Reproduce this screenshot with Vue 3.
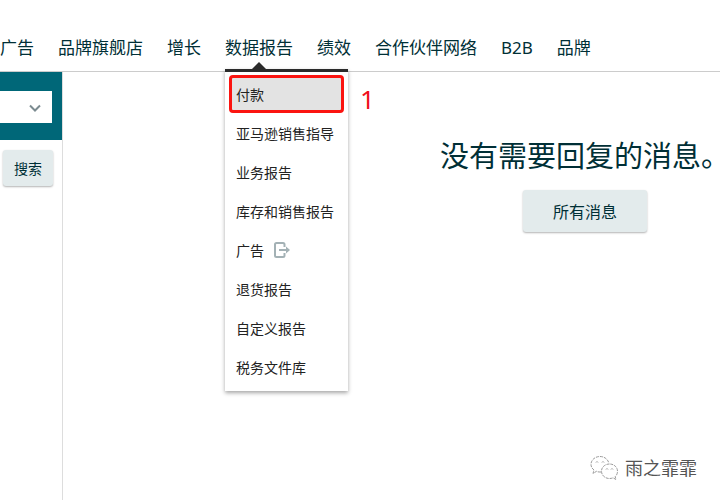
<template>
  <div class="page">
    <header class="topbar">
      <nav aria-label="主导航">
        <ul class="nav-list">
          <li v-for="item in navItems" :key="item.id" class="nav-item">
            <a href="#" class="nav-link" @click.prevent="toggle(item)">{{ item.label }}</a>

            <!-- 下拉菜单 -->
            <div v-if="item.children && openId === item.id" class="dropdown">
              <ul class="dropdown-list">
                <li v-for="child in item.children" :key="child.label" class="dropdown-item">
                  <a href="#" :class="['dropdown-link', { active: child.active }]">
                    {{ child.label }}
                    <svg
                      v-if="child.external"
                      class="external-icon"
                      viewBox="0 0 16 16"
                      fill="none"
                      aria-hidden="true"
                    >
                      <path
                        d="M10.5 5V2.5Q10.5 1 9 1H2.5Q1 1 1 2.5V13.5Q1 15 2.5 15H9Q10.5 15 10.5 13.5V11"
                        stroke="currentColor"
                        stroke-width="2"
                      />
                      <path d="M5 8H13" stroke="currentColor" stroke-width="2" />
                      <path d="M12 4.5L16 8L12 11.5Z" fill="currentColor" />
                    </svg>
                  </a>
                  <span v-if="child.mark" class="mark">{{ child.mark }}</span>
                </li>
              </ul>
            </div>
          </li>
        </ul>
      </nav>
    </header>

    <div class="body">
      <aside class="sidebar">
        <div class="filter">
          <div class="select-box">
            <select v-model="filter" class="select" aria-label="筛选">
              <option value=""></option>
            </select>
            <svg class="chevron" viewBox="0 0 12 8" fill="none" aria-hidden="true">
              <path d="M1 1.5L6 6.5L11 1.5" stroke="currentColor" stroke-width="2" />
            </svg>
          </div>
        </div>
        <button type="button" class="btn btn-search">搜索</button>
      </aside>

      <main class="content">
        <div class="empty">
          <h1 class="empty-title">没有需要回复的消息。</h1>
          <button type="button" class="btn btn-all">所有消息</button>
        </div>
      </main>
    </div>

    <!-- 公众号水印 -->
    <div class="watermark">
      <svg class="wechat-icon" viewBox="0 0 28 26" fill="none" stroke="#999" aria-hidden="true">
        <g stroke-dasharray="3 1">
          <path
            d="M11 17C9 17 7.5 17 6.5 16.3L3 18.5L4 15C2 13.5 1 11.5 1 9.5C1 5 5 1.5 10 1.5C14.5 1.5 18 4.5 18.8 8"
          />
          <path
            d="M19.5 9C15 9 11.5 12.2 11.5 16.2C11.5 20.3 15 23.5 19.5 23.5C20.8 23.5 22 23.3 23 22.8L26 24.5L25.2 21.7C26.7 20.3 27.5 18.4 27.5 16.2C27.5 12.2 24 9 19.5 9Z"
          />
        </g>
        <path d="M6 7.5L7 6.5L8 7.5M12 7.5L13 6.5L14 7.5" />
        <path d="M16 14.5L17 13.5L18 14.5M21 14.5L22 13.5L23 14.5" />
      </svg>
      <span>雨之霏霏</span>
    </div>
  </div>
</template>

<script setup>
import { ref } from 'vue'

const filter = ref('')
const openId = ref('reports')

const navItems = [
  { id: 'ads', label: '广告' },
  { id: 'store', label: '品牌旗舰店' },
  { id: 'growth', label: '增长' },
  {
    id: 'reports',
    label: '数据报告',
    children: [
      { label: '付款', active: true, mark: '1' },
      { label: '亚马逊销售指导' },
      { label: '业务报告' },
      { label: '库存和销售报告' },
      { label: '广告', external: true },
      { label: '退货报告' },
      { label: '自定义报告' },
      { label: '税务文件库' },
    ],
  },
  { id: 'performance', label: '绩效' },
  { id: 'partner', label: '合作伙伴网络' },
  { id: 'b2b', label: 'B2B' },
  { id: 'brand', label: '品牌' },
]

// 展开或收起菜单
const toggle = (item) => {
  openId.value = openId.value === item.id ? '' : item.id
}
</script>

<style>
body {
  margin: 0;
  background: #fff;
}
</style>

<style scoped>
.page {
  position: relative;
  display: flex;
  flex-direction: column;
  min-height: 100vh;
  overflow: hidden;
  font-family: 'Noto Sans', 'Noto Sans CJK SC', sans-serif;
  color: #002f36;
}

.topbar {
  padding: 36px 0 11px;
  border-bottom: 1px solid #ccc;
}

.nav-list {
  display: flex;
  gap: 24px;
  margin: 0;
  padding: 0;
  list-style: none;
}

.nav-item {
  position: relative;
  flex-shrink: 0;
}

.nav-link {
  display: block;
  font-size: 17px;
  line-height: 24px;
  white-space: nowrap;
  color: #002f36;
  text-decoration: none;
}

.dropdown {
  position: absolute;
  top: calc(100% + 9px);
  left: 0;
  z-index: 10;
  background: #fff;
  border-top: 3px solid #2b2b2b;
  box-shadow: 0 2px 4px rgba(0, 0, 0, 0.35);
}

.dropdown::before {
  content: '';
  position: absolute;
  bottom: 100%;
  left: 27px;
  margin-bottom: 3px;
  border: 7px solid transparent;
  border-top: 0;
  border-bottom-color: #2b2b2b;
}

.dropdown-list {
  display: flex;
  flex-direction: column;
  gap: 1px;
  margin: 0;
  padding: 3px 4px 5px;
  list-style: none;
}

.dropdown-item {
  position: relative;
}

.dropdown-link {
  display: flex;
  align-items: center;
  gap: 10px;
  box-sizing: border-box;
  height: 38px;
  padding: 0 7px 0 4px;
  border: 3px solid transparent;
  border-radius: 4px;
  font-size: 14px;
  white-space: nowrap;
  color: #222;
  text-decoration: none;
}

.dropdown-link.active {
  background: #e3e3e3;
  border-color: #fb1410;
}

.external-icon {
  width: 16px;
  height: 16px;
  color: #a3b1b5;
}

.mark {
  position: absolute;
  top: 0;
  left: 100%;
  padding-left: 16px;
  font-size: 26px;
  line-height: 48px;
  color: #f00f1c;
}

.body {
  display: flex;
  flex: 1;
}

.sidebar {
  flex-shrink: 0;
  border-right: 1px solid #ddd;
}

.filter {
  padding: 19px 10px 17px 0;
  background: #006778;
}

.select-box {
  position: relative;
  width: 52px;
}

.select {
  display: block;
  width: 100%;
  height: 32px;
  padding: 0;
  appearance: none;
  background: #fff;
  border: 0;
  border-radius: 0;
}

.chevron {
  position: absolute;
  top: 13px;
  right: 11px;
  width: 12px;
  height: 8px;
  color: #7b8b90;
  pointer-events: none;
}

.btn {
  border: 0;
  border-radius: 3px;
  background: #e3ebec;
  box-shadow: 0 1px 2px rgba(0, 0, 0, 0.3);
  font-family: inherit;
  color: #002f36;
  cursor: pointer;
}

.btn-search {
  display: block;
  height: 36px;
  margin: 10px 9px 0 3px;
  padding: 0 11px;
  font-size: 14px;
}

.content {
  display: flex;
  flex: 1;
  justify-content: flex-end;
}

.empty {
  display: flex;
  flex-direction: column;
  align-items: center;
  gap: 14px;
  margin-right: -10px;
  padding-top: 64px;
}

.empty-title {
  margin: 0;
  font-size: 29px;
  font-weight: 400;
  line-height: 40px;
  white-space: nowrap;
}

.btn-all {
  height: 42px;
  padding: 0 30px;
  font-size: 16px;
}

.watermark {
  position: absolute;
  right: 23px;
  bottom: 18px;
  display: flex;
  align-items: center;
  gap: 7px;
  font-size: 18px;
  line-height: 28px;
  color: #555;
}

.wechat-icon {
  width: 28px;
  height: 26px;
}
</style>
